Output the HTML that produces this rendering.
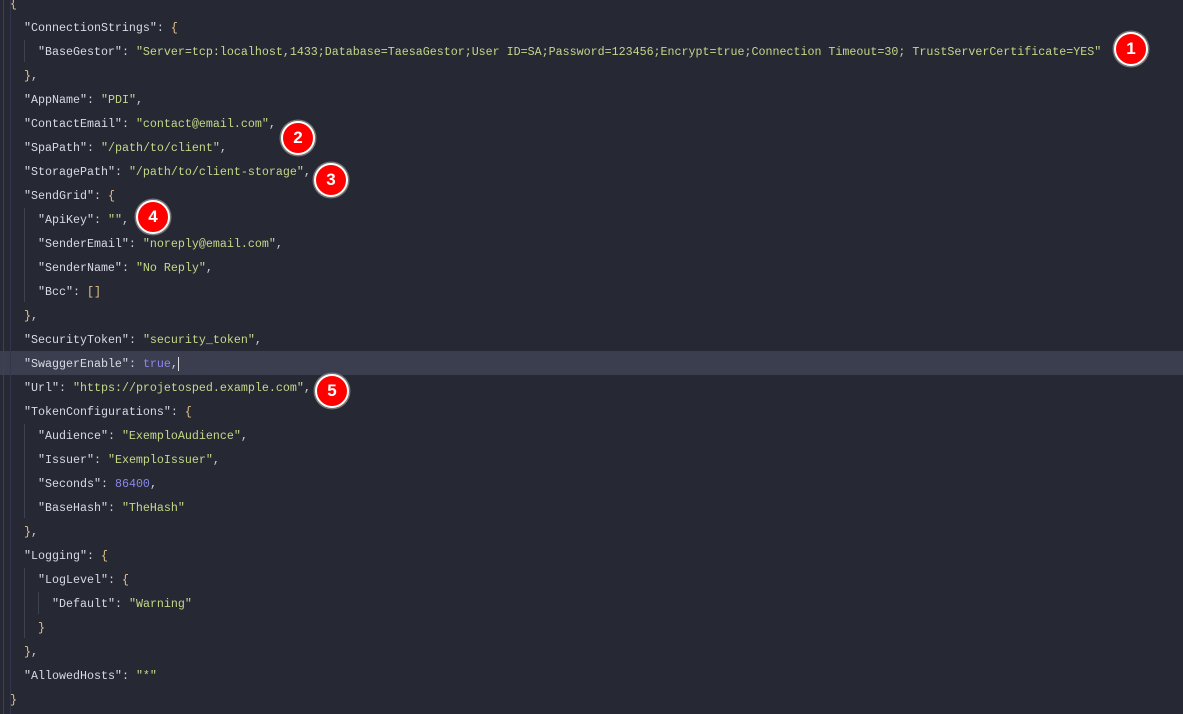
<!DOCTYPE html>
<html><head><meta charset="utf-8"><style>
body{margin:0;width:1183px;height:714px;background:#262833;overflow:hidden;position:relative;font-family:"Liberation Mono",monospace;font-size:11.67px}
.l{position:absolute;left:10px;height:24px;line-height:24px;white-space:pre;color:#cbd1da;margin-top:1px}
.k{color:#d6dbe3}.s{color:#c3d88a}.n{color:#8b87e6}.b{color:#e0c58a}
.hl{position:absolute;left:0;top:351px;width:1183px;height:24px;background:#3b3e4f}
.g{position:absolute;width:1px;background:#3e4150}
.c{position:absolute;width:30px;height:30px;border-radius:50%;background:#f00;border:2px solid #fff;box-shadow:0 0 0 1.5px #777;color:#fff;font:bold 17px "Liberation Sans",sans-serif;text-align:center;line-height:30px}
</style></head><body>
<div class="hl"></div>
<div class="g" style="left:3px;top:0;height:714px"></div>
<div class="g" style="left:10px;top:0;height:714px;background:#33364a"></div>
<div class="g" style="left:24px;top:40px;height:22px"></div>
<div class="g" style="left:24px;top:208px;height:94px"></div>
<div class="g" style="left:24px;top:424px;height:94px"></div>
<div class="g" style="left:24px;top:568px;height:70px"></div>
<div class="g" style="left:38px;top:592px;height:22px"></div>
<div class="l" style="top:-9px"><span class="b">{</span></div>
<div class="l" style="top:15px">  <span class="k">"ConnectionStrings"</span>: <span class="b">{</span></div>
<div class="l" style="top:39px">    <span class="k">"BaseGestor"</span>: <span class="s">"Server=tcp:localhost,1433;Database=TaesaGestor;User ID=SA;Password=123456;Encrypt=true;Connection Timeout=30; TrustServerCertificate=YES"</span></div>
<div class="l" style="top:63px">  <span class="b">}</span>,</div>
<div class="l" style="top:87px">  <span class="k">"AppName"</span>: <span class="s">"PDI"</span>,</div>
<div class="l" style="top:111px">  <span class="k">"ContactEmail"</span>: <span class="s">"contact@email.com"</span>,</div>
<div class="l" style="top:135px">  <span class="k">"SpaPath"</span>: <span class="s">"/path/to/client"</span>,</div>
<div class="l" style="top:159px">  <span class="k">"StoragePath"</span>: <span class="s">"/path/to/client-storage"</span>,</div>
<div class="l" style="top:183px">  <span class="k">"SendGrid"</span>: <span class="b">{</span></div>
<div class="l" style="top:207px">    <span class="k">"ApiKey"</span>: <span class="s">""</span>,</div>
<div class="l" style="top:231px">    <span class="k">"SenderEmail"</span>: <span class="s">"noreply@email.com"</span>,</div>
<div class="l" style="top:255px">    <span class="k">"SenderName"</span>: <span class="s">"No Reply"</span>,</div>
<div class="l" style="top:279px">    <span class="k">"Bcc"</span>: <span class="b">[]</span></div>
<div class="l" style="top:303px">  <span class="b">}</span>,</div>
<div class="l" style="top:327px">  <span class="k">"SecurityToken"</span>: <span class="s">"security_token"</span>,</div>
<div class="l" style="top:351px">  <span class="k">"SwaggerEnable"</span>: <span class="n">true</span>,<span style="border-left:1px solid #ddd"></span></div>
<div class="l" style="top:375px">  <span class="k">"Url"</span>: <span class="s">"https://projetosped.example.com"</span>,</div>
<div class="l" style="top:399px">  <span class="k">"TokenConfigurations"</span>: <span class="b">{</span></div>
<div class="l" style="top:423px">    <span class="k">"Audience"</span>: <span class="s">"ExemploAudience"</span>,</div>
<div class="l" style="top:447px">    <span class="k">"Issuer"</span>: <span class="s">"ExemploIssuer"</span>,</div>
<div class="l" style="top:471px">    <span class="k">"Seconds"</span>: <span class="n">86400</span>,</div>
<div class="l" style="top:495px">    <span class="k">"BaseHash"</span>: <span class="s">"TheHash"</span></div>
<div class="l" style="top:519px">  <span class="b">}</span>,</div>
<div class="l" style="top:543px">  <span class="k">"Logging"</span>: <span class="b">{</span></div>
<div class="l" style="top:567px">    <span class="k">"LogLevel"</span>: <span class="b">{</span></div>
<div class="l" style="top:591px">      <span class="k">"Default"</span>: <span class="s">"Warning"</span></div>
<div class="l" style="top:615px">    <span class="b">}</span></div>
<div class="l" style="top:639px">  <span class="b">}</span>,</div>
<div class="l" style="top:663px">  <span class="k">"AllowedHosts"</span>: <span class="s">"*"</span></div>
<div class="l" style="top:687px"><span class="b">}</span></div>
<div class="c" style="left:1114px;top:32px">1</div>
<div class="c" style="left:281px;top:121px">2</div>
<div class="c" style="left:314px;top:163px">3</div>
<div class="c" style="left:136px;top:200px">4</div>
<div class="c" style="left:315px;top:374px">5</div>
</body></html>
